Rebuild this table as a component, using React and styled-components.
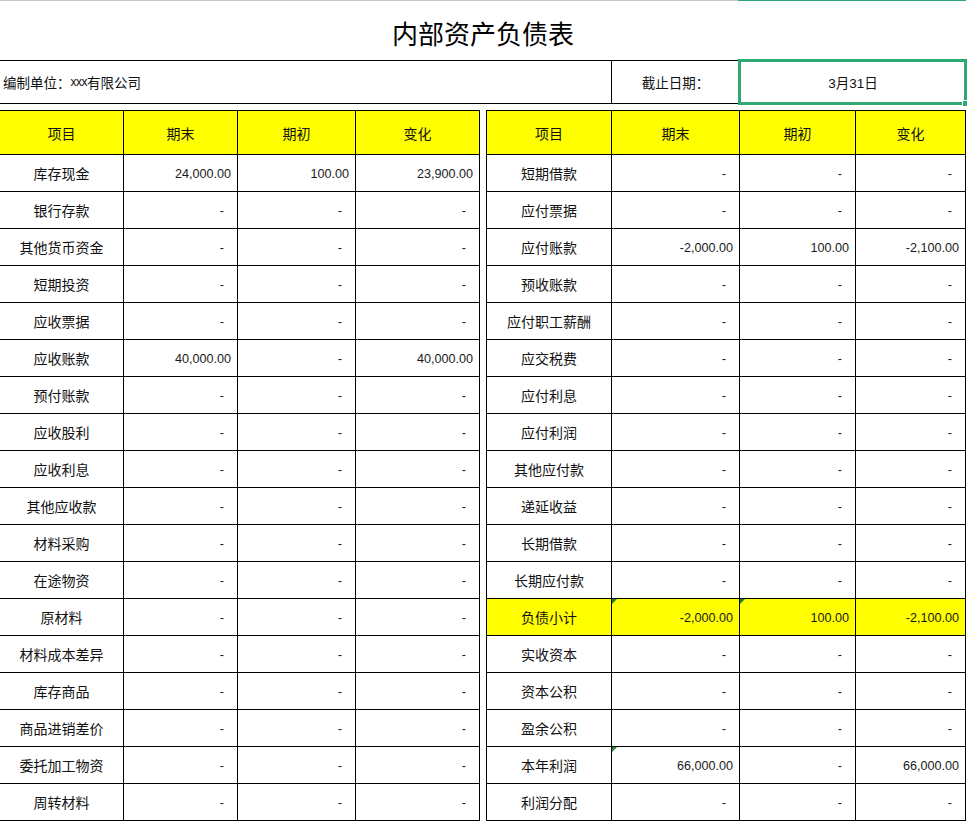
import React from "react";
import styled, { createGlobalStyle } from "styled-components";

const GlobalStyle = createGlobalStyle`
  html, body { margin: 0; padding: 0; background: #fff; }
  body {
    font-family: "Liberation Sans", "Noto Sans CJK SC", sans-serif;
    color: #111;
    overflow: hidden;
  }
`;

const Sheet = styled.div`
  width: 967px;
  display: flex;
  flex-direction: column;
`;

const TopStrip = styled.div`
  display: flex;
  height: 1px;
`;

const StripPart = styled.div`
  height: 1px;
  width: ${(p) => p.$w}px;
  background: ${(p) => (p.$active ? "#2fa874" : "#c8c8cc")};
`;

const TitleRow = styled.div`
  width: 966px;
  height: 59px;
  display: flex;
  align-items: center;
  justify-content: center;
  padding-top: 4px;
  box-sizing: border-box;
  font-family: "Noto Sans CJK SC", sans-serif;
  font-size: 26px;
  color: #000;
`;

const InfoRow = styled.div`
  display: grid;
  grid-template-columns: 612px 128px 226px;
  width: 966px;
  height: 44px;
  box-sizing: border-box;
  border-top: 1px solid #000;
  border-bottom: 1px solid #000;
`;

const InfoCell = styled.div`
  position: relative;
  display: flex;
  align-items: center;
  justify-content: ${(p) => (p.$align === "left" ? "flex-start" : "center")};
  padding-left: ${(p) => (p.$align === "left" ? "3px" : "0")};
  border-right: ${(p) => (p.$last ? "none" : "1px solid #000")};
  font-family: "Liberation Sans", "Noto Sans CJK SC", sans-serif;
  font-size: 13.5px;
  color: #111;
`;

const Narrow = styled.span`
  font-size: 12px;
  letter-spacing: -0.5px;
`;

const SelectionFrame = styled.div`
  position: absolute;
  left: -2px;
  top: -2px;
  right: -1px;
  bottom: -2px;
  border: 3px solid #2fa874;
  pointer-events: none;
`;

const SelectionHandle = styled.div`
  position: absolute;
  right: -3px;
  bottom: -4px;
  width: 5px;
  height: 5px;
  background: #2fa874;
  border: 1px solid #fff;
`;

const Spacer = styled.div`
  height: 6px;
`;

const Tables = styled.div`
  display: flex;
  gap: 6px;
  align-items: flex-start;
`;

const Ledger = styled.div`
  display: grid;
  grid-template-columns: ${(p) => p.$cols};
  border-top: 1px solid #000;
  border-left: ${(p) => (p.$edge ? "1px solid #000" : "none")};
`;

const Cell = styled.div`
  position: relative;
  box-sizing: border-box;
  display: flex;
  align-items: center;
  border-right: 1px solid #000;
  border-bottom: 1px solid #000;
  background: ${(p) => (p.$hl ? "#ffff00" : "#fff")};
  color: #111;
`;

const HeadCell = styled(Cell)`
  height: 44px;
  justify-content: center;
  font-family: "Noto Sans CJK SC", sans-serif;
  font-size: 14px;
  background: #ffff00;
`;

const NameCell = styled(Cell)`
  height: 37px;
  justify-content: center;
  font-family: "Noto Sans CJK SC", sans-serif;
  font-size: 14px;
`;

const NumCell = styled(Cell)`
  height: 37px;
  justify-content: flex-end;
  padding-top: 2px;
  padding-right: ${(p) => (p.$dash ? "13px" : "6px")};
  font-family: "Liberation Sans", sans-serif;
  font-size: 12.6px;
  color: #1a1a1a;
`;

const Flag = styled.span`
  position: absolute;
  top: 0;
  left: 0;
  width: 0;
  height: 0;
  border-top: 5px solid #2e7d32;
  border-right: 5px solid transparent;
`;

const heads = ["项目", "期末", "期初", "变化"];

const assets = [
  ["库存现金", "24,000.00", "100.00", "23,900.00"],
  ["银行存款"],
  ["其他货币资金"],
  ["短期投资"],
  ["应收票据"],
  ["应收账款", "40,000.00", "-", "40,000.00"],
  ["预付账款"],
  ["应收股利"],
  ["应收利息"],
  ["其他应收款"],
  ["材料采购"],
  ["在途物资"],
  ["原材料"],
  ["材料成本差异"],
  ["库存商品"],
  ["商品进销差价"],
  ["委托加工物资"],
  ["周转材料"],
];

const liabilities = [
  ["短期借款"],
  ["应付票据"],
  ["应付账款", "-2,000.00", "100.00", "-2,100.00"],
  ["预收账款"],
  ["应付职工薪酬"],
  ["应交税费"],
  ["应付利息"],
  ["应付利润"],
  ["其他应付款"],
  ["递延收益"],
  ["长期借款"],
  ["长期应付款"],
  ["负债小计", "-2,000.00", "100.00", "-2,100.00", { hl: true, flags: [1, 2] }],
  ["实收资本"],
  ["资本公积"],
  ["盈余公积"],
  ["本年利润", "66,000.00", "-", "66,000.00", { flags: [1] }],
  ["利润分配"],
];

function LedgerTable({ rows, cols, edge }) {
  return (
    <Ledger $cols={cols} $edge={edge}>
      {heads.map((h) => (
        <HeadCell key={h}>{h}</HeadCell>
      ))}
      {rows.map((r) => {
        const opts = r[4] && typeof r[4] === "object" ? r[4] : {};
        const vals = [r[1] || "-", r[2] || "-", r[3] || "-"];
        return (
          <React.Fragment key={r[0]}>
            <NameCell $hl={opts.hl}>{r[0]}</NameCell>
            {vals.map((v, i) => (
              <NumCell key={i} $hl={opts.hl} $dash={v === "-"}>
                {opts.flags && opts.flags.includes(i + 1) && <Flag />}
                {v}
              </NumCell>
            ))}
          </React.Fragment>
        );
      })}
    </Ledger>
  );
}

export default function App() {
  return (
    <>
      <GlobalStyle />
      <Sheet>
        <TopStrip>
          <StripPart $w={738} />
          <StripPart $w={228} $active />
        </TopStrip>
        <TitleRow>内部资产负债表</TitleRow>
        <InfoRow>
          <InfoCell $align="left">
            编制单位：<Narrow>xxx</Narrow>有限公司
          </InfoCell>
          <InfoCell>截止日期：</InfoCell>
          <InfoCell $last>
            3月31日
            <SelectionFrame />
            <SelectionHandle />
          </InfoCell>
        </InfoRow>
        <Spacer />
        <Tables>
          <LedgerTable rows={assets} cols="124px 114px 118px 124px" />
          <LedgerTable rows={liabilities} cols="125px 128px 116px 110px" edge />
        </Tables>
      </Sheet>
    </>
  );
}
